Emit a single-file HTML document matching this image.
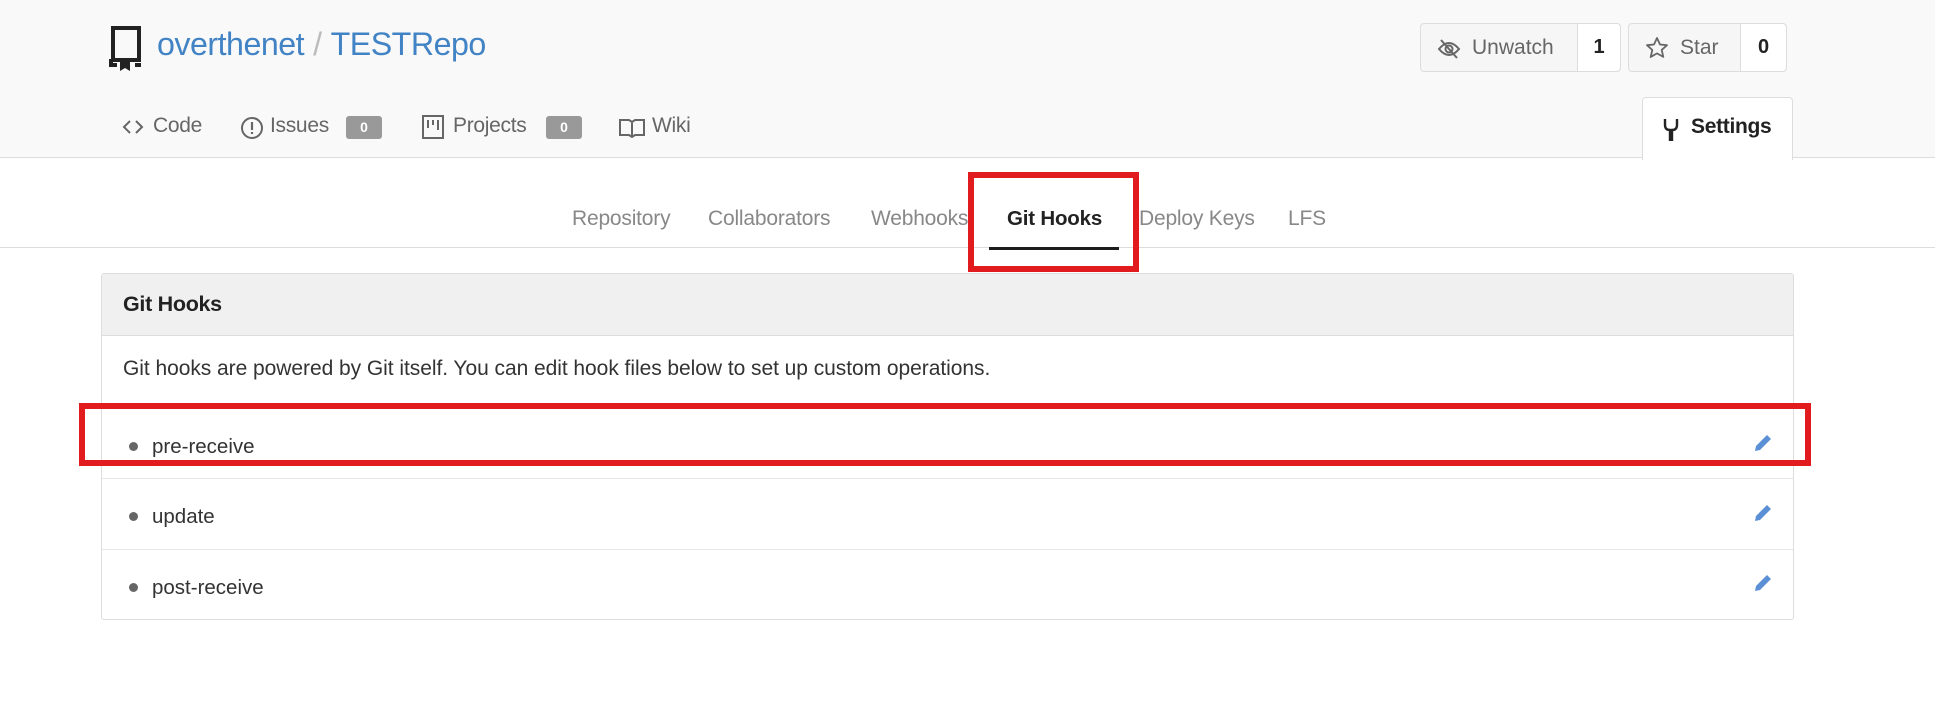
<!DOCTYPE html>
<html><head><meta charset="utf-8"><style>
*{box-sizing:border-box;margin:0;padding:0}
body{width:1935px;height:712px;background:#fff;font-family:"Liberation Sans",sans-serif;position:relative;overflow:hidden;color:#333}
.abs{position:absolute}
.hdr{left:0;top:0;width:1935px;height:158px;background:#f9f9f9;border-bottom:1px solid #ddd}
.title{left:157px;top:26px;font-size:32.2px;color:#4183c4;letter-spacing:-0.5px}
.title .sl{color:#bbb;margin:0 9px}
.nav{top:114px;font-size:21px;color:#666;letter-spacing:-0.3px}
.badge{top:116px;height:23px;width:36px;background:#999;color:#fff;border-radius:3px;font-size:14px;text-align:center;line-height:23px;font-weight:bold}
.btn{top:23px;height:49px;border:1px solid #ddd;border-radius:4px;background:#f6f6f6;font-size:21px;color:#666}
.btn .n{position:absolute;top:0;height:47px;background:#fff;color:#222;font-weight:bold;text-align:center;line-height:47px;border-left:1px solid #ddd;border-radius:0 4px 4px 0;font-size:20px}
.sub{top:207px;font-size:21px;color:#888;letter-spacing:-0.2px}
.box{left:101px;top:273px;width:1693px;height:347px;border:1px solid #ddd;border-radius:3px}
.row{position:absolute;left:0;width:1691px;border-top:1px solid #e8e8e8}
.dot{position:absolute;left:27px;width:9px;height:9px;border-radius:50%;background:#666}
.rt{position:absolute;left:50px;font-size:20.5px;color:#333}
.red{border:6px solid #e21b1f}
</style></head><body>
<div class="abs hdr"></div>
<svg class="abs" style="left:109px;top:25px" width="34" height="46" viewBox="0 0 34 46"><path d="M4 3h26v32H4z" fill="none" stroke="#222" stroke-width="4"/><path d="M2 34v6h6M26 40h6" stroke="#222" stroke-width="4" fill="none"/><path d="M11 36h10v10l-5-3-5 3z" fill="#222"/></svg>
<div class="abs title">overthenet<span class="sl">/</span>TESTRepo</div>

<svg class="abs" style="left:121px;top:119px" width="24" height="16"><path d="M9 2L3 8l6 6M15 2l6 6-6 6" fill="none" stroke="#666" stroke-width="2"/></svg>
<div class="abs nav" style="left:153px">Code</div>
<svg class="abs" style="left:240px;top:116px" width="24" height="24"><circle cx="12" cy="12" r="10" fill="none" stroke="#666" stroke-width="2"/><path d="M12 6v8M12 16v2" stroke="#666" stroke-width="2.2"/></svg>
<div class="abs nav" style="left:270px">Issues</div>
<div class="abs badge" style="left:346px">0</div>
<svg class="abs" style="left:422px;top:115px" width="22" height="24"><rect x="1" y="1" width="20" height="22" fill="none" stroke="#666" stroke-width="2"/><path d="M6 5v8M11 5v5M16 5v10" stroke="#666" stroke-width="2"/></svg>
<div class="abs nav" style="left:453px">Projects</div>
<div class="abs badge" style="left:546px">0</div>
<svg class="abs" style="left:619px;top:118px" width="26" height="20"><path d="M1 2h9l3 2 3-2h9v15h-9l-3 2-3-2H1zM13 4v15" fill="none" stroke="#666" stroke-width="2"/></svg>
<div class="abs nav" style="left:652px">Wiki</div>

<div class="abs btn" style="left:1420px;width:201px">
<svg style="position:absolute;left:16px;top:14px" width="24" height="22"><path d="M2 11q10-12 20 0q-10 12-20 0z" fill="none" stroke="#666" stroke-width="2"/><circle cx="12" cy="11" r="3.5" fill="none" stroke="#666" stroke-width="2"/><path d="M4 2l16 18" stroke="#666" stroke-width="2"/></svg>
<span style="position:absolute;left:51px;top:12px">Unwatch</span>
<div class="n" style="left:156px;width:43px">1</div></div>
<div class="abs btn" style="left:1628px;width:159px">
<svg style="position:absolute;left:16px;top:12px" width="24" height="24"><path d="M12 2l3 6.5 7 .7-5.3 4.7 1.6 7L12 17.4 5.7 21l1.6-7L2 9.2l7-.7z" fill="none" stroke="#666" stroke-width="1.8" stroke-linejoin="round"/></svg>
<span style="position:absolute;left:51px;top:12px">Star</span>
<div class="n" style="left:111px;width:46px">0</div></div>

<div class="abs" style="left:1642px;top:97px;width:151px;height:63px;background:#fff;border:1px solid #ddd;border-bottom:none;border-radius:4px 4px 0 0"></div>
<svg class="abs" style="left:1663px;top:118px" width="16" height="24"><path d="M2 1v6q0 5 5 5v11M14 1v6q0 5-5 5v11" fill="none" stroke="#222" stroke-width="2.4"/></svg>
<div class="abs" style="left:1691px;top:115px;font-size:21px;font-weight:bold;color:#222;letter-spacing:-0.3px">Settings</div>

<div class="abs" style="left:0;top:247px;width:1935px;height:1px;background:#ddd"></div>
<div class="abs sub" style="left:572px">Repository</div>
<div class="abs sub" style="left:708px">Collaborators</div>
<div class="abs sub" style="left:871px">Webhooks</div>
<div class="abs sub" style="left:1007px;color:#222;font-weight:bold;font-size:20.5px">Git Hooks</div>
<div class="abs sub" style="left:1139px">Deploy Keys</div>
<div class="abs sub" style="left:1288px">LFS</div>
<div class="abs" style="left:989px;top:247px;width:130px;height:3px;background:#1b1c1d"></div>

<div class="abs box">
<div style="position:absolute;left:0;top:0;width:1691px;height:62px;background:#f0f0f0;border-bottom:1px solid #ddd"></div>
<div style="position:absolute;left:21px;top:18px;font-size:21.5px;font-weight:bold;color:#222;letter-spacing:-0.3px">Git Hooks</div>
<div style="position:absolute;left:21px;top:83px;font-size:21px;color:#333;letter-spacing:-0.05px">Git hooks are powered by Git itself. You can edit hook files below to set up custom operations.</div>
<div class="row" style="top:132px;height:73px"><div class="dot" style="top:35px"></div><div class="rt" style="top:28px">pre-receive</div></div>
<div class="row" style="top:204px;height:71px"><div class="dot" style="top:33px"></div><div class="rt" style="top:26px">update</div></div>
<div class="row" style="top:275px;height:70px"><div class="dot" style="top:33px"></div><div class="rt" style="top:26px">post-receive</div></div>
</div>
<svg class="abs" style="left:1753px;top:433px" width="20" height="20"><path d="M2 18l1-5L14 2l4 4L7 17z" fill="#5b8fd6"/></svg>
<svg class="abs" style="left:1753px;top:503px" width="20" height="20"><path d="M2 18l1-5L14 2l4 4L7 17z" fill="#5b8fd6"/></svg>
<svg class="abs" style="left:1753px;top:573px" width="20" height="20"><path d="M2 18l1-5L14 2l4 4L7 17z" fill="#5b8fd6"/></svg>

<div class="abs red" style="left:968px;top:172px;width:171px;height:100px"></div>
<div class="abs red" style="left:79px;top:403px;width:1732px;height:63px"></div>
</body></html>
